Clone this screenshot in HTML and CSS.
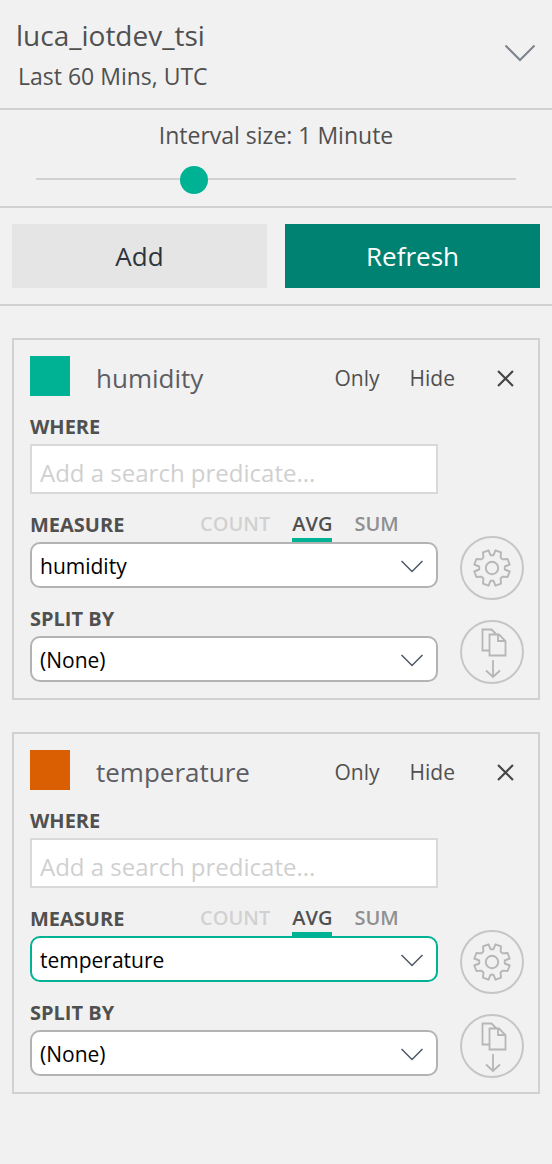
FILE: index.html
```html
<!DOCTYPE html>
<html lang="en">
<head>
<meta charset="utf-8">
<meta name="viewport" content="width=device-width, initial-scale=1">
<title>luca_iotdev_tsi</title>
<link rel="stylesheet" href="styles.css">
</head>
<body>
<svg class="defs" aria-hidden="true">
  <symbol id="chevron" viewBox="0 0 32 18"><path d="M1.5 1.5 16 16 30.500 1.500" fill="none" stroke="currentColor" stroke-width="2"/></symbol>
  <symbol id="close" viewBox="0 0 16 16"><path d="M1 1l14 14M15 1 1 15" fill="none" stroke="currentColor" stroke-width="2"/></symbol>
  <symbol id="gear" viewBox="0 0 40 40"><g fill="none" stroke="currentColor" stroke-width="1.9" stroke-linejoin="round"><circle cx="20" cy="20" r="6.200"/><path d="M21.500 7.200 23.500 2.300 29 4.400 28.600 9.500 30.500 11.400 35.600 11 37.700 16.500 32.800 18.500V21.500L37.700 23.500 35.600 29 30.500 28.600 28.600 30.500 29 35.600 23.500 37.700 21.500 32.800H18.500L16.500 37.700 11 35.600 11.400 30.500 9.500 28.600 4.400 29 2.300 23.500 7.200 21.500V18.500L2.300 16.500 4.400 11 9.500 11.400 11.400 9.500 11 4.400 16.500 2.300 18.500 7.200Z"/></g></symbol>
  <symbol id="clone" viewBox="0 0 64 64"><g fill="none" stroke="currentColor" stroke-width="1.800"><path d="M29 30.500h-6.500v-21h9l5 5M29.500 14.500h9.500l6.500 6.500v14.500h-16zM38 14.500v6.500h7.500M33 40v17M26 50.500l7 6.500 7-6.500"/></g></symbol>
</svg>
<main class="panel">
  <header class="env">
    <div>
      <h1 class="env-name">luca_iotdev_tsi</h1>
      <p class="env-range">Last 60 Mins, UTC</p>
    </div>
    <button class="icon-button" type="button" aria-label="Expand"><svg class="env-chevron"><use href="#chevron"/></svg></button>
  </header>
  <section class="interval">
    <label class="interval-label" for="interval">Interval size: 1 Minute</label>
    <input class="slider" id="interval" type="range" min="0" max="500" value="159">
  </section>
  <section class="actions">
    <button class="action" type="button">Add</button>
    <button class="action action-primary" type="button">Refresh</button>
  </section>
  <section class="terms">
    <article class="card">
      <div class="card-head">
        <span class="swatch swatch-green"></span>
        <h2 class="card-name">humidity</h2>
        <button class="link-button" type="button">Only</button>
        <button class="link-button" type="button">Hide</button>
        <button class="icon-button close-button" type="button" aria-label="Remove humidity"><svg class="close-icon"><use href="#close"/></svg></button>
      </div>
      <div class="card-body">
        <div class="fields">
          <div class="label-row"><label class="label" for="where-1">WHERE</label></div>
          <input class="predicate" id="where-1" type="text" placeholder="Add a search predicate...">
          <div class="label-row">
            <label class="label" for="measure-1">MEASURE</label>
            <div class="tabs">
              <button class="tab" type="button" disabled>COUNT</button>
              <button class="tab tab-active" type="button">AVG</button>
              <button class="tab" type="button">SUM</button>
            </div>
          </div>
          <div class="select-wrap">
            <select class="select" id="measure-1"><option>humidity</option></select>
            <svg class="select-chevron"><use href="#chevron"/></svg>
          </div>
          <div class="label-row"><label class="label" for="split-1">SPLIT BY</label></div>
          <div class="select-wrap">
            <select class="select" id="split-1"><option>(None)</option></select>
            <svg class="select-chevron"><use href="#chevron"/></svg>
          </div>
        </div>
        <div class="tools">
          <button class="round-button" type="button" aria-label="Settings"><svg class="gear-icon"><use href="#gear"/></svg></button>
          <button class="round-button" type="button" aria-label="Duplicate"><svg class="clone-icon"><use href="#clone"/></svg></button>
        </div>
      </div>
    </article>
    <article class="card">
      <div class="card-head">
        <span class="swatch swatch-orange"></span>
        <h2 class="card-name">temperature</h2>
        <button class="link-button" type="button">Only</button>
        <button class="link-button" type="button">Hide</button>
        <button class="icon-button close-button" type="button" aria-label="Remove temperature"><svg class="close-icon"><use href="#close"/></svg></button>
      </div>
      <div class="card-body">
        <div class="fields">
          <div class="label-row"><label class="label" for="where-2">WHERE</label></div>
          <input class="predicate" id="where-2" type="text" placeholder="Add a search predicate...">
          <div class="label-row">
            <label class="label" for="measure-2">MEASURE</label>
            <div class="tabs">
              <button class="tab" type="button" disabled>COUNT</button>
              <button class="tab tab-active" type="button">AVG</button>
              <button class="tab" type="button">SUM</button>
            </div>
          </div>
          <div class="select-wrap">
            <select class="select select-focus" id="measure-2"><option>temperature</option></select>
            <svg class="select-chevron"><use href="#chevron"/></svg>
          </div>
          <div class="label-row"><label class="label" for="split-2">SPLIT BY</label></div>
          <div class="select-wrap">
            <select class="select" id="split-2"><option>(None)</option></select>
            <svg class="select-chevron"><use href="#chevron"/></svg>
          </div>
        </div>
        <div class="tools">
          <button class="round-button" type="button" aria-label="Settings"><svg class="gear-icon"><use href="#gear"/></svg></button>
          <button class="round-button" type="button" aria-label="Duplicate"><svg class="clone-icon"><use href="#clone"/></svg></button>
        </div>
      </div>
    </article>
  </section>
</main>
</body>
</html>
```
FILE: styles.css
```css
* { box-sizing: border-box; }
body {
  margin: 0;
  background: #f1f1f1;
  color: #505050;
  font-family: "Open Sans", "Noto Sans", sans-serif;
}
button, input, select {
  margin: 0;
  padding: 0;
  border: 0;
  background: none;
  color: inherit;
  font: inherit;
}
svg { display: block; }
h1, h2, p { margin: 0; font-weight: 400; }
.defs { display: none; }

.env {
  display: flex;
  align-items: center;
  justify-content: space-between;
  padding: 12px 16px 14px;
  border-bottom: 2px solid #d1d1d1;
}
.env-name { font-size: 28px; line-height: 46px; }
.env-range { padding-left: 2px; font-size: 23px; line-height: 36px; }
.env-chevron { width: 32px; height: 18px; color: #7d838d; }

.interval {
  display: flex;
  flex-direction: column;
  padding: 7px 36px 13px;
  border-bottom: 2px solid #d1d1d1;
}
.interval-label { font-size: 23px; line-height: 36px; text-align: center; }
.slider {
  width: 100%;
  height: 28px;
  margin-top: 12px;
  appearance: none;
}
.slider::-webkit-slider-runnable-track { height: 2px; background: #d1d1d1; }
.slider::-webkit-slider-thumb {
  width: 28px;
  height: 28px;
  margin-top: -12px;
  border-radius: 50%;
  background: #00b294;
  appearance: none;
}

.actions {
  display: grid;
  grid-template-columns: 1fr 1fr;
  gap: 18px;
  padding: 16px 12px;
  border-bottom: 2px solid #d1d1d1;
}
.action { height: 64px; background: #e5e5e5; color: #2d333b; font-size: 26px; }
.action-primary { background: #008272; color: #fff; }

.terms { display: grid; gap: 32px; padding: 32px 12px; }
.card { padding: 16px 14px 14px 16px; border: 2px solid #d1d1d1; }
.card-head { display: flex; align-items: center; height: 40px; }
.swatch { width: 40px; height: 40px; margin-right: 26px; }
.swatch-green { background: #00b294; }
.swatch-orange { background: #d95f02; }
.card-name { flex: 1; padding-top: 4px; color: #5d5d63; font-size: 26px; line-height: 36px; }
.link-button { margin-right: 30px; padding-top: 4px; font-size: 21px; line-height: 36px; }
.link-button + .close-button { margin-left: 2px; }
.close-button { padding: 12px 10px 8px; }
.close-icon { width: 17px; height: 17px; color: #444; }

.card-body { display: flex; gap: 22px; }
.fields { flex: 1; min-width: 0; padding-bottom: 2px; }
.label-row { display: flex; height: 48px; padding-top: 14px; }
.label { width: 170px; font-size: 20px; font-weight: 700; line-height: 34px; }
.tabs { display: flex; gap: 22px; }
.tab {
  padding-top: 2px;
  border-bottom: 4px solid transparent;
  color: #8f8f8f;
  font-size: 20px;
  font-weight: 600;
  line-height: 28px;
}
.tab:disabled { color: #d1d1d1; }
.tab-active { border-color: #00b294; color: #505050; }
.predicate {
  display: block;
  width: 100%;
  height: 50px;
  padding: 6px 8px 0;
  border: 2px solid #d9d9d9;
  background: #fff;
  font-size: 24px;
}
.predicate::placeholder { color: #d0d0d0; opacity: 1; }
.select-wrap { position: relative; }
.select {
  display: block;
  width: 100%;
  height: 46px;
  padding: 2px 40px 0 8px;
  border: 2px solid #b3b3b3;
  border-radius: 10px;
  background: #fff;
  color: #000;
  font-size: 21px;
  appearance: none;
}
.select-focus { border-color: #00b294; }
.select-chevron {
  position: absolute;
  top: 18px;
  right: 14px;
  width: 24px;
  height: 13px;
  color: #4b5563;
  pointer-events: none;
}
.tools { display: flex; flex-direction: column; justify-content: flex-end; gap: 20px; }
.round-button {
  display: grid;
  place-items: center;
  width: 64px;
  height: 64px;
  border: 2px solid #c6c6c6;
  border-radius: 50%;
  color: #b6b6b6;
}
.gear-icon { width: 40px; height: 40px; }
.clone-icon { width: 64px; height: 64px; margin: -2px; }
```
